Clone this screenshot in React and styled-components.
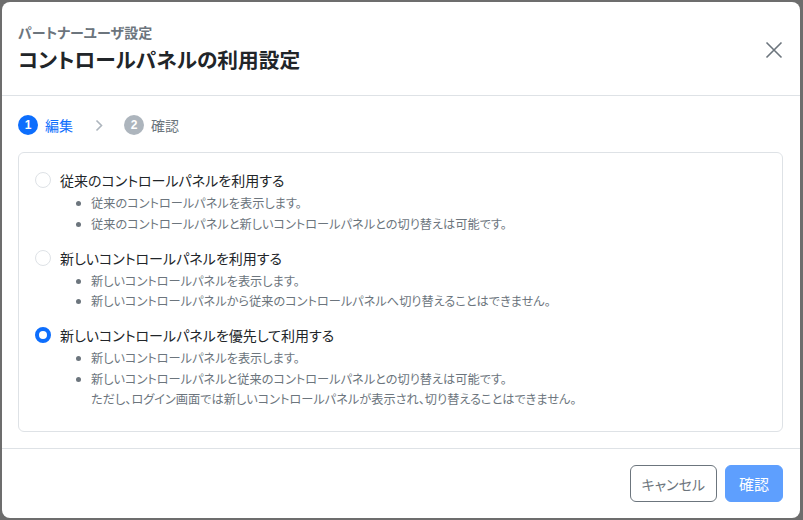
import React, { useState } from 'react'
import styled, { createGlobalStyle } from 'styled-components'

const GlobalStyle = createGlobalStyle`
  html, body {
    margin: 0;
    padding: 0;
    background: #6d6d6d;
  }
  body {
    font-family: "Noto Sans CJK JP", "Noto Sans", sans-serif;
    font-feature-settings: "palt";
    color: #212529;
  }
`

const options = [
  {
    id: 'legacy',
    label: '従来のコントロールパネルを利用する',
    notes: [
      ['従来のコントロールパネルを表示します。'],
      ['従来のコントロールパネルと新しいコントロールパネルとの切り替えは可能です。'],
    ],
  },
  {
    id: 'new',
    label: '新しいコントロールパネルを利用する',
    notes: [
      ['新しいコントロールパネルを表示します。'],
      ['新しいコントロールパネルから従来のコントロールパネルへ切り替えることはできません。'],
    ],
  },
  {
    id: 'prefer-new',
    label: '新しいコントロールパネルを優先して利用する',
    notes: [
      ['新しいコントロールパネルを表示します。'],
      [
        '新しいコントロールパネルと従来のコントロールパネルとの切り替えは可能です。',
        'ただし、ログイン画面では新しいコントロールパネルが表示され、切り替えることはできません。',
      ],
    ],
  },
]

const App = () => {
  const [selected, setSelected] = useState('prefer-new')

  return (
    <>
      <GlobalStyle />
      <Page>
        <Modal>
          <Header>
            <div>
              <Subtitle>パートナーユーザ設定</Subtitle>
              <Title>コントロールパネルの利用設定</Title>
            </div>
            <CloseButton aria-label="閉じる">
              <svg width="18" height="18" viewBox="0 0 18 18">
                <path d="M1.5 1.5 L16.5 16.5 M16.5 1.5 L1.5 16.5" stroke="#6c757d" strokeWidth="1.6" fill="none" />
              </svg>
            </CloseButton>
          </Header>

          <Body>
            <Stepper>
              <Step>
                <StepNumber active>1</StepNumber>
                <StepLabel active>編集</StepLabel>
              </Step>
              <Chevron width="8" height="13" viewBox="0 0 8 13">
                <path d="M1.5 1.5 L6.5 6.5 L1.5 11.5" stroke="#adb5bd" strokeWidth="1.6" fill="none" />
              </Chevron>
              <Step>
                <StepNumber>2</StepNumber>
                <StepLabel>確認</StepLabel>
              </Step>
            </Stepper>

            <Card>
              {options.map((opt) => (
                <Option key={opt.id}>
                  <OptionLabel onClick={() => setSelected(opt.id)}>
                    <Radio checked={selected === opt.id} />
                    {opt.label}
                  </OptionLabel>
                  <Notes>
                    {opt.notes.map((lines, i) => (
                      <Note key={i}>
                        {lines.map((line, j) => (
                          <span key={j}>{line}</span>
                        ))}
                      </Note>
                    ))}
                  </Notes>
                </Option>
              ))}
            </Card>
          </Body>

          <Footer>
            <CancelButton>キャンセル</CancelButton>
            <ConfirmButton disabled>確認</ConfirmButton>
          </Footer>
        </Modal>
      </Page>
    </>
  )
}

export default App

const Page = styled.div`
  padding: 2px 0 0 2px;
`

const Modal = styled.div`
  width: 798px;
  height: 516px;
  background: #fff;
  border-radius: 8px;
  display: flex;
  flex-direction: column;
  overflow: hidden;
`

const Header = styled.div`
  flex-shrink: 0;
  height: 94px;
  box-sizing: border-box;
  border-bottom: 1px solid #dee2e6;
  padding: 19px 16px 0 16px;
  display: flex;
  justify-content: space-between;
  align-items: flex-start;
`

const Subtitle = styled.div`
  font-size: 14px;
  line-height: 22px;
  font-weight: 700;
  color: #6c757d;
`

const Title = styled.h1`
  margin: 1px 0 0 0;
  font-size: 20.7px;
  line-height: 30px;
  font-weight: 700;
  color: #212529;
`

const CloseButton = styled.button`
  border: none;
  background: none;
  padding: 0;
  margin: 20px 1px 0 0;
  width: 18px;
  height: 18px;
  cursor: pointer;
  display: flex;
`

const Body = styled.div`
  flex: 1;
  padding: 19px 17px 0 16px;
  border-bottom: 1px solid #dee2e6;
  display: flex;
  flex-direction: column;
`

const Stepper = styled.div`
  display: flex;
  align-items: center;
  height: 20px;
  margin-bottom: 17px;
`

const Step = styled.div`
  display: flex;
  align-items: center;
  gap: 7px;
`

const StepNumber = styled.span`
  width: 20px;
  height: 20px;
  border-radius: 50%;
  background: ${(p) => (p.active ? '#0d6efd' : '#adb5bd')};
  color: #fff;
  font-size: 12px;
  font-weight: 700;
  display: flex;
  align-items: center;
  justify-content: center;
  font-family: "Liberation Sans", sans-serif;
`

const StepLabel = styled.span`
  font-size: 14px;
  color: ${(p) => (p.active ? '#0d6efd' : '#6c757d')};
`

const Chevron = styled.svg`
  margin: 0 21px 0 22px;
`

const Card = styled.div`
  height: 280px;
  box-sizing: border-box;
  border: 1px solid #dee2e6;
  border-radius: 6px;
  padding: 16px 16px 0 16px;
  display: flex;
  flex-direction: column;
  gap: 12.5px;
`

const Option = styled.div`
  display: flex;
  flex-direction: column;
`

const OptionLabel = styled.label`
  display: flex;
  align-items: center;
  gap: 9px;
  font-size: 14px;
  line-height: 22px;
  color: #212529;
  cursor: pointer;
`

const Radio = styled.span`
  width: 16px;
  height: 16px;
  box-sizing: border-box;
  border-radius: 50%;
  background: #fff;
  border: ${(p) => (p.checked ? '4.5px solid #0d6efd' : '1px solid #dee2e6')};
  flex-shrink: 0;
`

const Notes = styled.ul`
  list-style: none;
  margin: 2px 0 0 0;
  padding: 0 0 0 56px;
`

const Note = styled.li`
  position: relative;
  font-size: 12.2px;
  line-height: 20.5px;
  color: #6c757d;
  display: flex;
  flex-direction: column;

  &::before {
    content: '';
    position: absolute;
    left: -15px;
    top: 8px;
    width: 5px;
    height: 5px;
    border-radius: 50%;
    background: #6c757d;
  }
`

const Footer = styled.div`
  flex-shrink: 0;
  display: flex;
  justify-content: flex-end;
  gap: 8px;
  padding: 16px 17px 16px 16px;
`

const CancelButton = styled.button`
  height: 37px;
  padding: 0 11px;
  border: 1px solid #6c757d;
  border-radius: 6px;
  background: #fff;
  color: #6c757d;
  font-family: inherit;
  font-feature-settings: "palt";
  font-size: 14px;
  cursor: pointer;
`

const ConfirmButton = styled.button`
  height: 37px;
  padding: 0 13px;
  border: 1px solid #5e9ffe;
  border-radius: 6px;
  background: #5e9ffe;
  color: #fff;
  font-family: inherit;
  font-feature-settings: "palt";
  font-size: 15px;
`
